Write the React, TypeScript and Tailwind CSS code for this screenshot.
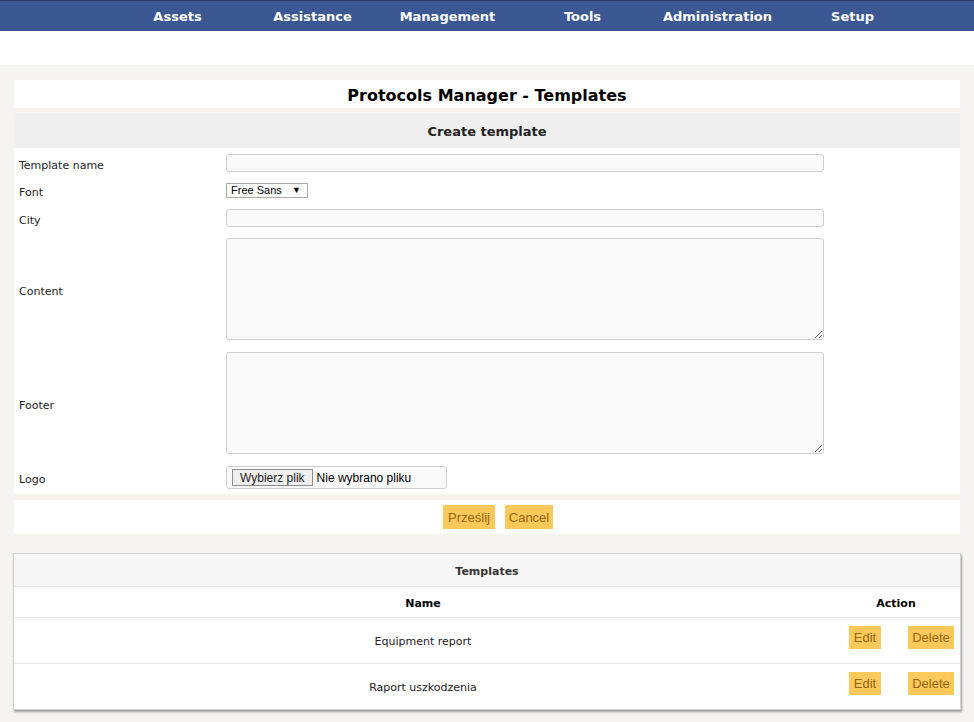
import React from "react";

const navItems = ["Assets", "Assistance", "Management", "Tools", "Administration", "Setup"];
const templates = ["Equipment report", "Raport uszkodzenia"];

const inputCls = "h-[18px] w-[598px] rounded-[3px] border border-[#cfcfcf] bg-[#fafafa]";
const areaCls = "block h-[102px] w-[598px] rounded-[3px] border border-[#cfcfcf] bg-[#fafafa] resize-y";

function Label({ children }: { children: React.ReactNode }) {
  return (
    <div className="mt-[4px] w-[212px] shrink-0 pl-[5px] text-[11px] leading-[13px] text-[#222]">{children}</div>
  );
}

function YellowButton({ children, className = "" }: { children: React.ReactNode; className?: string }) {
  return (
    <button
      className={
        "bg-[#fec95b] text-[13px] leading-none text-[#93650f] font-['Liberation_Sans',Arial,sans-serif] " + className
      }
    >
      {children}
    </button>
  );
}

export default function App() {
  return (
    <div className="min-h-screen bg-[#f5f4f0] font-['DejaVu_Sans',Verdana,sans-serif]">
      <nav className="flex h-[31px] items-center border-t border-[#27396a] bg-[#3b5894] pl-[110px] pt-[2px]">
        {navItems.map((item) => (
          <div key={item} className="w-[135px] text-center text-[13px] font-bold text-white">
            {item}
          </div>
        ))}
      </nav>
      <div className="h-[34px] bg-white" />

      <main className="px-[14px] pt-[15px] pb-[11px]">
        <div className="flex h-[28px] items-center justify-center bg-white pt-[4px] text-[16px] font-bold text-black">
          Protocols Manager - Templates
        </div>

        <div className="mt-[5px]">
          <div className="flex h-[35px] items-center justify-center bg-[#f0f0f0] pt-[2px] text-[13px] font-bold text-[#222]">
            Create template
          </div>
          <div className="flex flex-col bg-white pt-[6px] pb-[5px]">
            <div className="flex h-[18px] items-center">
              <Label>Template name</Label>
              <input className={inputCls} />
            </div>
            <div className="mt-[11px] flex h-[15px] items-center">
              <Label>Font</Label>
              <div className="flex h-[15px] w-[82px] items-center justify-between border border-[#a9a9a9] bg-white pl-[4px] pr-[6px] font-['Liberation_Sans',Arial,sans-serif] text-[11px] leading-none text-black">
                <span>Free Sans</span>
                <span className="text-[9px]">▼</span>
              </div>
            </div>
            <div className="mt-[11px] flex h-[18px] items-center">
              <Label>City</Label>
              <input className={inputCls} />
            </div>
            <div className="mt-[11px] flex h-[102px] items-center">
              <Label>Content</Label>
              <textarea className={areaCls} />
            </div>
            <div className="mt-[12px] flex h-[102px] items-center">
              <Label>Footer</Label>
              <textarea className={areaCls} />
            </div>
            <div className="mt-[12px] flex h-[23px] items-center">
              <Label>Logo</Label>
              <div className="flex h-[23px] w-[221px] items-center rounded-[3px] border border-[#cfcfcf] bg-[#fafafa] pl-[5px] font-['Liberation_Sans',Arial,sans-serif] text-[12px] leading-none text-black">
                <span className="flex h-[17px] items-center border border-[#8f8f8f] bg-[#efefef] px-[7px] text-[#222]">
                  Wybierz plik
                </span>
                <span className="ml-[4px]">Nie wybrano pliku</span>
              </div>
            </div>
          </div>
        </div>

        <div className="mt-[6px] flex h-[34px] items-center justify-center gap-[10px] bg-white pl-[22px]">
          <YellowButton className="h-[24px] w-[52px]">Prześlij</YellowButton>
          <YellowButton className="h-[24px] w-[48px]">Cancel</YellowButton>
        </div>

        <div className="-mx-[1px] mt-[19px] border border-[#cfcfcf] bg-white shadow-[1px_2px_2px_rgba(0,0,0,0.35)]">
          <div className="flex h-[33px] items-center justify-center border-b border-[#e6e6e6] bg-[#f7f7f7] pt-[4px] text-[11px] font-bold text-[#333]">
            Templates
          </div>
          <table className="w-full border-collapse text-[11px] text-[#222]">
            <thead>
              <tr className="h-[30px] border-b border-[#e6e6e6]">
                <th className="w-[818px] pt-[4px] text-center font-bold text-black">Name</th>
                <th className="pt-[4px] text-center font-bold text-black">Action</th>
              </tr>
            </thead>
            <tbody>
              {templates.map((t, i) => (
                <tr key={t} className={"h-[46px] " + (i < templates.length - 1 ? "border-b border-[#e6e6e6]" : "")}>
                  <td className="pt-[4px] text-center">{t}</td>
                  <td className="pb-[6px]">
                    <div className="flex items-center gap-[27px] pl-[17px]">
                      <YellowButton className="h-[23px] w-[32px]">Edit</YellowButton>
                      <YellowButton className="h-[23px] w-[46px]">Delete</YellowButton>
                    </div>
                  </td>
                </tr>
              ))}
            </tbody>
          </table>
        </div>
      </main>
    </div>
  );
}
